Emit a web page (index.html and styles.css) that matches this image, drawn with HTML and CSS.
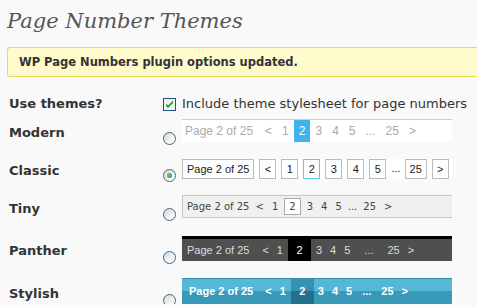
FILE: index.html
```html
<!DOCTYPE html>
<html lang="en">
<head>
    <meta charset="UTF-8">
    <title>Page Number Themes</title>
    <link rel="stylesheet" href="styles.css">
</head>
<body>
<div class="wrap">
    <h2>Page Number Themes</h2>
    <div class="updated"><p>WP Page Numbers plugin options updated.</p></div>

    <div class="form">
        <div class="row row-use">
            <div class="label">Use themes?</div>
            <span class="checkbox">
                <svg width="13" height="13" viewBox="0 0 13 13">
                    <rect x="0.5" y="0.5" width="12" height="12" fill="#f3f3ee" stroke="#1c5180"/>
                    <path d="M3 5.5 L5 7.5 L10 2.5 L10 5 L5 10 L3 8 Z" fill="#21a121"/>
                </svg>
            </span>
            <span class="check-text">Include theme stylesheet for page numbers</span>
        </div>

        <div class="row row-modern">
            <div class="label">Modern</div>
            <span class="radio"></span>
            <ul class="pg modern">
                <li class="info">Page 2 of 25</li>
                <li>&lt;</li><li>1</li><li class="cur">2</li><li>3</li><li>4</li><li>5</li>
                <li class="dots">...</li><li>25</li><li>&gt;</li>
            </ul>
        </div>

        <div class="row row-classic">
            <div class="label">Classic</div>
            <span class="radio on"></span>
            <ul class="pg classic">
                <li class="info">Page 2 of 25</li>
                <li>&lt;</li><li>1</li><li class="cur">2</li><li>3</li><li>4</li><li>5</li>
                <li class="dots">...</li><li>25</li><li>&gt;</li>
            </ul>
        </div>

        <div class="row row-tiny">
            <div class="label">Tiny</div>
            <span class="radio"></span>
            <ul class="pg tiny">
                <li class="info">Page 2 of 25</li>
                <li>&lt;</li><li>1</li><li class="cur">2</li><li>3</li><li>4</li><li>5</li>
                <li class="dots">...</li><li>25</li><li>&gt;</li>
            </ul>
        </div>

        <div class="row row-panther">
            <div class="label">Panther</div>
            <span class="radio"></span>
            <ul class="pg panther">
                <li class="info">Page 2 of 25</li>
                <li>&lt;</li><li>1</li><li class="cur">2</li><li>3</li><li>4</li><li>5</li>
                <li class="dots">...</li><li>25</li><li>&gt;</li>
            </ul>
        </div>

        <div class="row row-stylish">
            <div class="label">Stylish</div>
            <span class="radio"></span>
            <ul class="pg stylish">
                <li class="info">Page 2 of 25</li>
                <li>&lt;</li><li>1</li><li class="cur">2</li><li>3</li><li>4</li><li>5</li>
                <li class="dots">...</li><li>25</li><li>&gt;</li>
            </ul>
        </div>
    </div>
</div>
</body>
</html>
```

FILE: styles.css
```css
body {
    margin: 0;
    background: #f9f9f9;
    font-family: "DejaVu Sans", Verdana, sans-serif;
    color: #333;
}
.wrap {
    padding-left: 7px;
}
h2 {
    margin: 0 0 11px;
    padding-top: 6px;
    font: italic normal 21px/30px "DejaVu Serif", Georgia, serif;
    color: #555;
}
/* the notice runs on past the right edge of the window */
.updated {
    height: 30px;
    box-sizing: border-box;
    border: 1px solid #e6db55;
    border-right: 0;
    border-radius: 3px 0 0 3px;
    background: #fffbcc;
}
.updated p {
    margin: 0;
    padding-left: 11px;
    font-weight: bold;
    font-size: 11.5px;
    line-height: 28px;
}

.form {
    padding-top: 20px;
}
.row {
    display: flex;
    align-items: flex-end;
}
.label {
    flex: none;
    width: 156px;
    box-sizing: border-box;
    padding: 5px 0 0 2px;
    align-self: center;
    font-weight: bold;
    font-size: 13px;
    line-height: 16px;
}
.row-use {
    height: 14px;
    align-items: center;
}
.row-use .label {
    padding-top: 0;
}
.checkbox {
    flex: none;
    width: 13px;
    height: 13px;
    margin-right: 6px;
}
.checkbox svg {
    display: block;
}
.check-text {
    font-size: 13px;
    line-height: 16px;
    white-space: nowrap;
}
.row-modern { margin-top: 8px; }
.row-classic { margin-top: 16px; }
.row-tiny { margin-top: 16px; }
.row-panther { margin-top: 18px; }
.row-stylish { margin-top: 17px; }

.radio {
    flex: none;
    position: relative;
    width: 13px;
    height: 13px;
    box-sizing: border-box;
    margin: 0 6px -3px 0;
    border: 1px solid #3a6690;
    border-radius: 50%;
    background: linear-gradient(135deg, #d6d6ce, #f4f4f0 60%, #fff);
}
.radio.on::after {
    content: "";
    position: absolute;
    left: 3px;
    top: 3px;
    width: 5px;
    height: 5px;
    border-radius: 50%;
    background: radial-gradient(circle at 40% 40%, #5fd35f, #1f9a1f);
}

/* pagination samples */
.pg {
    display: flex;
    width: 270px;
    box-sizing: border-box;
    margin: 0;
    padding: 0;
    list-style: none;
    white-space: nowrap;
}
.pg li {
    flex: none;
}

.modern {
    height: 23px;
    border-top: 1px solid #ccc;
    background: #fff;
    font: 12px/22px "Liberation Sans", Arial, sans-serif;
    color: #aaa;
}
.modern li {
    padding: 0 5px;
}
.modern .info {
    padding: 0 7px 0 3px;
}
.modern .cur {
    background: #3fb3ec;
    color: #fff;
}

.classic {
    height: 20px;
    background: #fff;
    font: 11px/18px "Liberation Sans", Arial, sans-serif;
    color: #222;
}
.classic li {
    box-sizing: border-box;
    min-width: 17px;
    height: 20px;
    margin-right: 5px;
    padding: 0 4px;
    border: 1px solid #bbb;
    text-align: center;
}
.classic .cur {
    border-color: #5ccaf2;
}
.classic .dots {
    min-width: 0;
    margin-right: 4px;
    padding: 0;
    border: 0;
}

.tiny {
    height: 23px;
    align-items: center;
    border: 1px solid #c5c5c5;
    border-right: 0;
    background: #f0f0f0;
    font: 10px/21px "DejaVu Sans", Verdana, sans-serif;
    color: #444;
}
.tiny li {
    padding: 0 4px;
}
.tiny .info {
    padding: 0 2px 0 4px;
}
.tiny .cur {
    height: 17px;
    box-sizing: border-box;
    margin: 0 2px;
    border: 1px solid #aaa;
    background: #fff;
    line-height: 15px;
}
.tiny .dots {
    padding: 0 2px;
}

.panther {
    height: 25px;
    border-top: 3px solid #000;
    background: #4f4f4f;
    font: 11px/22px "Liberation Sans", Arial, sans-serif;
    color: #ddd;
}
.panther li {
    padding: 0 4px;
}
.panther .info {
    padding: 0 9px 0 5px;
}
.panther .cur {
    width: 23px;
    box-sizing: border-box;
    margin: 0 1px;
    padding: 0;
    background: #000;
    color: #fff;
    text-align: center;
}
.panther .dots {
    padding: 0 10px;
}

.stylish {
    height: 26px;
    border-top: 1px solid #3b8db0;
    background: linear-gradient(#55b8d8 12px, #3899b8 12px);
    font: bold 11px/25px "Liberation Sans", Arial, sans-serif;
    color: #fff;
}
.stylish li {
    padding: 0 4px;
}
.stylish .info {
    padding: 0 8px 0 7px;
}
.stylish .cur {
    width: 23px;
    box-sizing: border-box;
    margin-left: 1px;
    padding: 0;
    background: linear-gradient(#3a90b2 12px, #236f8e 12px);
    text-align: center;
}
.stylish .dots {
    padding: 0 6px;
}
```
